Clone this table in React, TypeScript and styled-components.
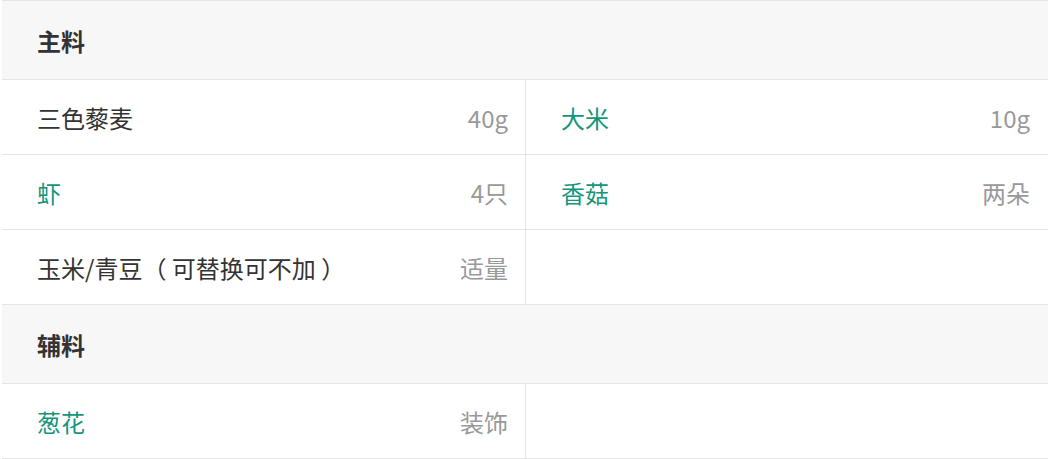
import React from "react";
import styled, { createGlobalStyle } from "styled-components";

const GlobalStyle = createGlobalStyle`
  html, body {
    margin: 0;
    padding: 0;
    background: #fff;
  }
  body {
    font-family: "Noto Sans CJK SC", "Noto Sans", sans-serif;
  }
`;

const Table = styled.div`
  margin: 0 2px;
  border-top: 1px solid #e5e5e5;
`;

const SectionTitle = styled.div`
  height: 78px;
  display: flex;
  align-items: center;
  padding: 0 35px;
  background: #f7f7f7;
  border-bottom: 1px solid #e5e5e5;
  font-size: 24px;
  font-weight: 700;
  color: #333;
`;

const Grid = styled.div`
  display: grid;
  grid-template-columns: 524px 1fr;
`;

const Cell = styled.div<{ $left?: boolean }>`
  height: 74px;
  display: flex;
  align-items: center;
  justify-content: space-between;
  padding: ${(p) => (p.$left ? "0 17px 0 35px" : "0 18px 0 35px")};
  border-bottom: 1px solid #e5e5e5;
  border-right: ${(p) => (p.$left ? "1px solid #e5e5e5" : "none")};
  font-size: 24px;
`;

const Name = styled.span<{ $link?: boolean }>`
  color: ${(p) => (p.$link ? "#15967c" : "#333")};
`;

const Amount = styled.span`
  color: #999;
`;

type Item = { name: string; amount: string; link?: boolean } | null;

const sections: { title: string; items: Item[] }[] = [
  {
    title: "主料",
    items: [
      { name: "三色藜麦", amount: "40g" },
      { name: "大米", amount: "10g", link: true },
      { name: "虾", amount: "4只", link: true },
      { name: "香菇", amount: "两朵", link: true },
      { name: "玉米/青豆（ 可替换可不加 ）", amount: "适量" },
      null,
    ],
  },
  {
    title: "辅料",
    items: [{ name: "葱花", amount: "装饰", link: true }, null],
  },
];

export default function App() {
  return (
    <>
      <GlobalStyle />
      <Table>
        {sections.map((s) => (
          <React.Fragment key={s.title}>
            <SectionTitle>{s.title}</SectionTitle>
            <Grid>
              {s.items.map((it, i) => (
                <Cell key={i} $left={i % 2 === 0}>
                  {it && (
                    <>
                      <Name $link={it.link}>{it.name}</Name>
                      <Amount>{it.amount}</Amount>
                    </>
                  )}
                </Cell>
              ))}
            </Grid>
          </React.Fragment>
        ))}
      </Table>
    </>
  );
}
